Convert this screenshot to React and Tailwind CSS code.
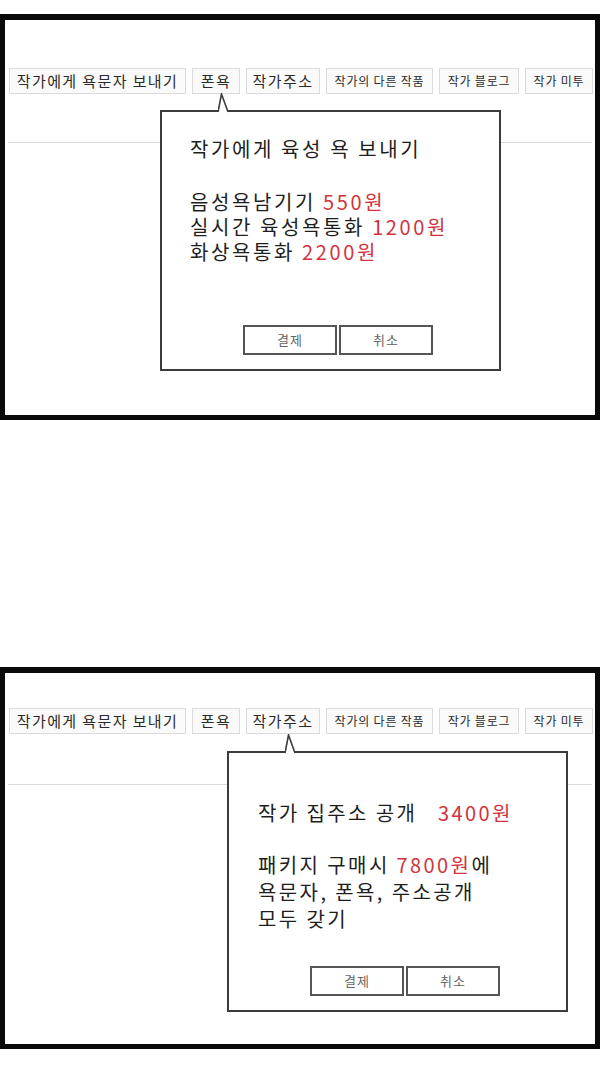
const font = { fontFamily: '"Noto Sans CJK KR", "Noto Sans", sans-serif' };

const tabs = [
  { label: "작가에게 욕문자 보내기", w: "w-[177px]", big: true },
  { label: "폰욕", w: "w-[48px]", big: true },
  { label: "작가주소", w: "w-[74px]", big: true },
  { label: "작가의 다른 작품", w: "w-[107px]" },
  { label: "작가 블로그", w: "w-[80px]" },
  { label: "작가 미투", w: "w-[68px]" },
];

const Price = ({ children }) => <span className="text-[#d3333d]">{children}</span>;

const TabBar = () => (
  <div className="flex gap-[6px] pl-[4px]">
    {tabs.map((t) => (
      <div
        key={t.label}
        className={`${t.w} h-[26px] flex items-center justify-center border border-[#dcdcdc] bg-[#fafafa] text-[#2a2a2a] ${
          t.big ? "text-[15px] tracking-[1.4px]" : "text-[12px] tracking-[0.8px]"
        }`}
      >
        {t.label}
      </div>
    ))}
  </div>
);

// speech-bubble popup with the little notch pointing up at a tab
const Popup = ({ className, children }) => (
  <div className={`absolute w-[341px] h-[261px] border-2 border-[#3c3c3c] bg-white flex flex-col ${className}`}>
    <svg className="absolute left-[56px] top-[-19px]" width="12" height="21" viewBox="0 0 12 21">
      <polygon points="0,21 0,19 3.5,1 10,19 10,21" fill="white" />
      <polyline points="0,19 3.5,1 10,19" fill="none" stroke="#3c3c3c" strokeWidth="1.6" />
    </svg>
    <div className="flex-1">{children}</div>
    <div className="flex gap-[2px] pl-[81px] pb-[14px]">
      {["결제", "취소"].map((b) => (
        <div
          key={b}
          className="w-[94px] h-[30px] border-2 border-[#555] flex items-center justify-center text-[13px] tracking-[1px] text-[#666]"
        >
          {b}
        </div>
      ))}
    </div>
  </div>
);

export default function App() {
  return (
    <div className="bg-white w-[600px] h-[1067px] pt-[14px]" style={font}>
      {/* first panel: 폰욕 */}
      <div className="relative h-[406px] border-[5px] border-t-[6px] border-[#0a0a0a] pt-[48px]">
        <TabBar />
        <div className="mt-[48px] mx-[3px] h-px bg-[#d9d9d9]" />
        <Popup className="left-[155px] top-[90px]">
          <div className="pl-[28px] pt-[24px] text-[20px] leading-[25px] text-[#1e1e1e] tracking-[2.6px]">
            <div>작가에게 육성 욕 보내기</div>
            <div className="mt-[28px]">
              음성욕남기기 <Price>550원</Price>
            </div>
            <div>
              실시간 육성욕통화 <Price>1200원</Price>
            </div>
            <div>
              화상욕통화 <Price>2200원</Price>
            </div>
          </div>
        </Popup>
      </div>

      <div className="h-[247px]" />

      {/* second panel: 작가주소 */}
      <div className="relative h-[382px] border-[5px] border-t-[6px] border-[#0a0a0a] pt-[35px]">
        <TabBar />
        <div className="mt-[50px] mx-[3px] h-px bg-[#d9d9d9]" />
        <Popup className="left-[222px] top-[78px]">
          <div className="pl-[29px] pt-[46px] text-[20px] leading-[27px] text-[#1e1e1e] tracking-[2.4px]">
            <div>
              작가 집주소 공개&nbsp;&nbsp; <Price>3400원</Price>
            </div>
            <div className="mt-[25px]">
              패키지 구매시 <Price>7800원</Price>에
            </div>
            <div>욕문자, 폰욕, 주소공개</div>
            <div>모두 갖기</div>
          </div>
        </Popup>
      </div>
    </div>
  );
}
